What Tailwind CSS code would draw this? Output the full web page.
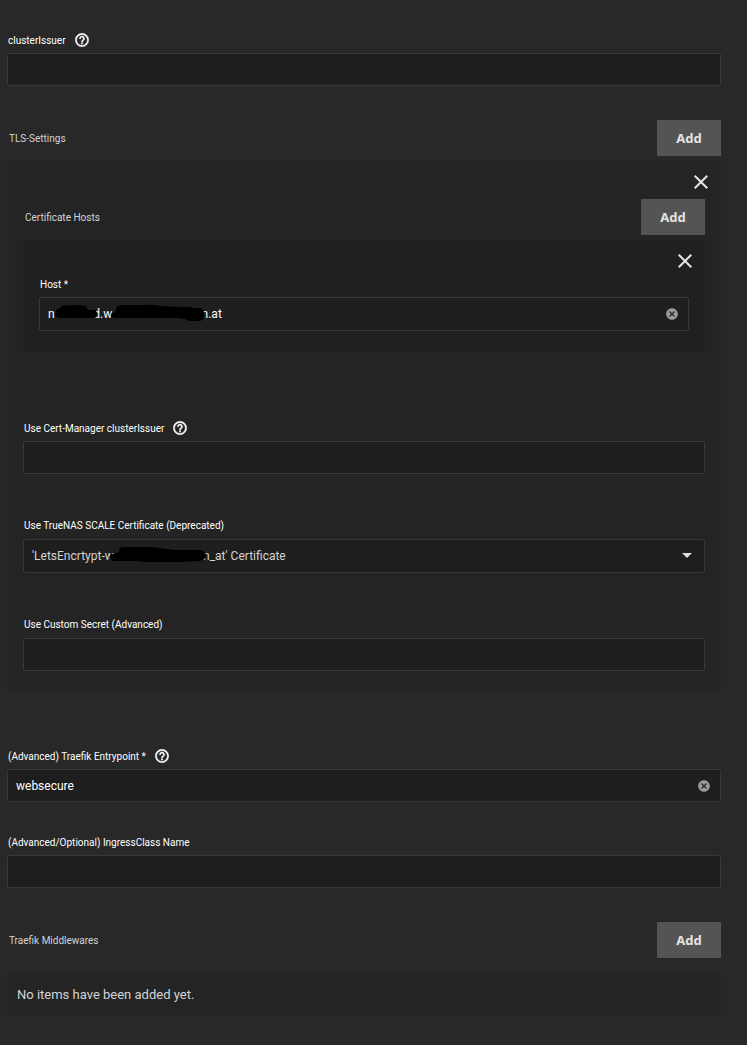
<!DOCTYPE html>
<html lang="en">
<head>
<meta charset="utf-8">
<meta name="viewport" content="width=device-width, initial-scale=1">
<title>Ingress settings</title>
<script src="https://cdn.jsdelivr.net/npm/@tailwindcss/browser@4"></script>
</head>
<body class="min-h-screen bg-[#282828] font-['Roboto',sans-serif] text-[10px] text-white">
<svg class="hidden" aria-hidden="true">
  <symbol id="help" viewBox="0 0 24 24"><path fill="currentColor" stroke="currentColor" stroke-width=".6" d="M11 18h2v-2h-2v2zm1-16C6.480 2 2 6.480 2 12s4.480 10 10 10 10-4.480 10-10S17.520 2 12 2zm0 18c-4.410 0-8-3.590-8-8s3.590-8 8-8 8 3.590 8 8-3.590 8-8 8zm0-14c-2.210 0-4 1.790-4 4h2c0-1.100.9-2 2-2s2 .9 2 2c0 2-3 1.750-3 5h2c0-2.250 3-2.500 3-5 0-2.210-1.790-4-4-4z"/></symbol>
  <symbol id="close" viewBox="0 0 24 24"><path fill="currentColor" d="M19 6.410L17.590 5 12 10.590 6.410 5 5 6.410 10.590 12 5 17.590 6.410 19 12 13.410 17.590 19 19 17.590 13.410 12z"/></symbol>
  <symbol id="clear" viewBox="0 0 24 24"><path fill="currentColor" d="M12 2C6.470 2 2 6.470 2 12s4.470 10 10 10 10-4.470 10-10S17.530 2 12 2zm5 13.590L15.590 17 12 13.410 8.410 17 7 15.590 10.590 12 7 8.410 8.410 7 12 10.590 15.590 7 17 8.410 13.410 12 17 15.590z"/></symbol>
</svg>
<form class="pt-[30px] pr-[26px] pb-[30px] pl-[7px]">

  <div>
    <div class="mb-[3px] flex h-5 items-center gap-2 pl-px">
      <label for="issuer">clusterIssuer</label>
      <button type="button" aria-label="Help"><svg class="block size-4"><use href="#help"/></svg></button>
    </div>
    <input id="issuer" type="text" class="block h-[33px] w-full rounded-xs border border-[#383838] bg-[#1e1e1e] px-2 text-[12px] outline-none">
  </div>

  <div class="mt-[34px] flex items-center justify-between pl-[2px]">
    <h2 class="text-[#d4d4d4]">TLS-Settings</h2>
    <button type="button" class="h-9 w-16 bg-[#545454] pt-px font-['Noto_Sans',sans-serif] text-[13px] font-bold text-[#e4e4e4]">Add</button>
  </div>

  <section class="mt-[5px] rounded-xs bg-[#242424] px-4 pt-[9px] pb-5">
    <div class="flex justify-end -mr-2"><button type="button" aria-label="Remove TLS setting" class="text-[#e4e4e4]"><svg class="block size-6"><use href="#close"/></svg></button></div>
    <div class="mt-[5px] flex items-center justify-between pl-[2px]">
      <h3 class="text-[#d4d4d4]">Certificate Hosts</h3>
      <button type="button" class="h-9 w-16 bg-[#545454] pt-px font-['Noto_Sans',sans-serif] text-[13px] font-bold text-[#e4e4e4]">Add</button>
    </div>

    <section class="mt-[5px] rounded-xs bg-[#202020] px-4 pt-[10px] pb-5">
      <div class="flex justify-end -mt-px mb-px -mr-2"><button type="button" aria-label="Remove host" class="text-[#e4e4e4]"><svg class="block size-6"><use href="#close"/></svg></button></div>
      <div class="mb-[3px] flex h-5 items-center pl-px"><label for="host">Host *</label></div>
      <div class="relative">
        <input id="host" type="text" value="n             d.w                              n.at" class="block h-[34px] w-full rounded-xs border border-[#383838] bg-[#1e1e1e] pr-8 pl-2 text-[12px] outline-none">
        <svg class="pointer-events-none absolute top-[5px] left-4 h-6 w-40 text-black" viewBox="0 0 160 24" fill="currentColor" aria-hidden="true">
          <path d="M1 8Q5 7 6 4Q21 2 31 4L33 8H40Q42 9 42 12T40 16H4Q0 15 0 12Z"/>
          <path d="M61 6Q63 3 67 3H90Q97 2 106 4L128 5Q134 4 138 6H145Q149 7 149 11V15Q149 18 144 19H138Q132 19 130 17L122 16H58Q54 14 57 11L61 9Z"/>
        </svg>
        <button type="button" aria-label="Clear host" class="absolute inset-y-0 right-[10px] text-[#9a9a9a]"><svg class="block size-[14px]"><use href="#clear"/></svg></button>
      </div>
    </section>

    <div class="mt-[67px]">
      <div class="mb-[3px] flex h-5 items-center gap-2 pl-px">
        <label for="cert-issuer">Use Cert-Manager clusterIssuer</label>
        <button type="button" aria-label="Help"><svg class="block size-4"><use href="#help"/></svg></button>
      </div>
      <input id="cert-issuer" type="text" class="block h-[33px] w-full rounded-xs border border-[#383838] bg-[#1e1e1e] px-2 text-[12px] outline-none">
    </div>

    <div class="mt-[41px]">
      <div class="mb-1 flex h-5 items-center pl-px"><label for="cert">Use TrueNAS SCALE Certificate (Deprecated)</label></div>
      <div class="relative">
        <select id="cert" class="block h-[34px] w-full appearance-none rounded-xs border border-[#383838] bg-[#1e1e1e] pr-8 pl-2 text-[12px] text-[#d4d4d4] outline-none">
          <option>'LetsEncrtypt-w&nbsp;&nbsp;&nbsp;&nbsp;&nbsp;&nbsp;&nbsp;&nbsp;&nbsp;&nbsp;&nbsp;&nbsp;&nbsp;&nbsp;&nbsp;&nbsp;&nbsp;&nbsp;&nbsp;&nbsp;&nbsp;&nbsp;&nbsp;&nbsp;&nbsp;&nbsp;&nbsp;&nbsp;&nbsp;&nbsp;n_at' Certificate</option>
        </select>
        <svg class="pointer-events-none absolute top-[5px] left-[86px] h-6 w-28 text-black" viewBox="0 0 112 24" fill="currentColor" aria-hidden="true">
          <path d="M1 11L10 8Q9 3 15 3L43 3L65 6H91Q97 7 97 12Q96 16 91 17L73 18H36Q32 18 30 17H4Q0 16 1 11Z"/>
        </svg>
        <svg class="pointer-events-none absolute top-[14px] right-[13px] h-[5px] w-[10px]" viewBox="0 0 10 5" aria-hidden="true"><path fill="#dedede" d="M0 0h10L5 5z"/></svg>
      </div>
    </div>

    <div class="mt-[41px]">
      <div class="mb-1 flex h-5 items-center pl-px"><label for="secret">Use Custom Secret (Advanced)</label></div>
      <input id="secret" type="text" class="block h-[33px] w-full rounded-xs border border-[#383838] bg-[#1e1e1e] px-2 text-[12px] outline-none">
    </div>
  </section>

  <div class="mt-[55px]">
    <div class="mb-[3px] flex h-5 items-center gap-2 pl-px">
      <label for="entry">(Advanced) Traefik Entrypoint *</label>
      <button type="button" aria-label="Help"><svg class="block size-4"><use href="#help"/></svg></button>
    </div>
    <div class="relative">
      <input id="entry" type="text" value="websecure" class="block h-[33px] w-full rounded-xs border border-[#383838] bg-[#1e1e1e] pr-8 pl-2 text-[12px] outline-none">
      <button type="button" aria-label="Clear entrypoint" class="absolute inset-y-0 right-[10px] text-[#9a9a9a]"><svg class="block size-[14px]"><use href="#clear"/></svg></button>
    </div>
  </div>

  <div class="mt-[30px]">
    <div class="mb-[3px] flex h-5 items-center pl-px"><label for="ingress">(Advanced/Optional) IngressClass Name</label></div>
    <input id="ingress" type="text" class="block h-[33px] w-full rounded-xs border border-[#383838] bg-[#1e1e1e] px-2 text-[12px] outline-none">
  </div>

  <div class="mt-[34px] flex items-center justify-between pl-[2px]">
    <h2 class="text-[#d4d4d4]">Traefik Middlewares</h2>
    <button type="button" class="h-9 w-16 bg-[#545454] pt-px font-['Noto_Sans',sans-serif] text-[13px] font-bold text-[#e4e4e4]">Add</button>
  </div>
  <p class="mt-4 flex h-[41px] items-center rounded-xs bg-[#242424] px-[10px] text-[13px] text-[#d4d4d4]">No items have been added yet.</p>
</form>
</body>
</html>
